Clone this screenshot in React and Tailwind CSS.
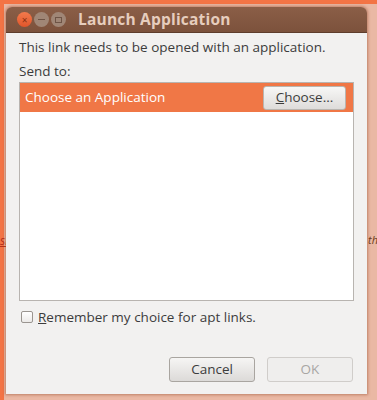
export default function App() {
  const font = { fontFamily: '"Open Sans", "Noto Sans", sans-serif' };
  return (
    <div className="relative w-[377px] h-[400px] overflow-hidden bg-[#eab8a4]" style={font}>
      <div className="absolute left-0 top-0 w-[377px] h-[4px] bg-[#f37445]" />
      <div className="absolute left-0 top-0 w-[4px] h-[400px] bg-[#f37445]" />
      <div className="absolute left-[0px] top-[232px] text-[12px] italic text-[#b5301a] underline">sl</div>
      <div className="absolute left-[368px] top-[232px] text-[11px] italic text-[#6b3a1a]">th</div>
      <div className="absolute left-[6px] top-[7px] w-[361px] h-[387px] flex flex-col rounded-t-[6px] overflow-hidden shadow-[0_0_3px_1px_rgba(160,90,60,0.6)]">
        <div className="h-[26px] shrink-0 flex items-center bg-gradient-to-b from-[#8b5e47] to-[#7c523c] border-b border-[#5e3d2c] pl-[11px]">
          <div className="flex items-center gap-[2px]">
            <div className="w-[15px] h-[15px] rounded-full bg-gradient-to-b from-[#f47a4c] to-[#e0552a] flex items-center justify-center text-[#8a3010] text-[10px] leading-none">×</div>
            <div className="w-[15px] h-[15px] rounded-full bg-[#a08676] flex items-center justify-center">
              <div className="w-[7px] h-[1px] bg-[#6e5446]" />
            </div>
            <div className="w-[15px] h-[15px] rounded-full bg-[#a08676] flex items-center justify-center">
              <div className="w-[7px] h-[6px] border border-[#6e5446]" />
            </div>
          </div>
          <div className="ml-[12px] text-[15.5px] font-bold text-[#e6cdbd] leading-none tracking-[0.2px]">Launch Application</div>
        </div>
        <div className="flex-1 bg-[#f2f1f0] flex flex-col px-[13px] pt-[4px] text-[13.5px] text-[#3c3c3c]">
          <div className="leading-[20px]">This link needs to be opened with an application.</div>
          <div className="leading-[20px] mt-[4px]">Send to:</div>
          <div className="mt-[1px] h-[219px] shrink-0 bg-white border border-[#b8b4b0] flex flex-col">
            <div className="h-[29px] bg-[#f07746] flex items-center justify-between pl-[5px] pr-[7px]">
              <span className="text-white">Choose an Application</span>
              <div className="w-[83px] h-[24px] rounded-[3px] border border-[#b9b5b0] bg-gradient-to-b from-[#f7f7f6] to-[#dedcda] flex items-center justify-center text-[#3c3c3c]">
                <span><span className="underline">C</span>hoose...</span>
              </div>
            </div>
          </div>
          <div className="flex items-center h-[20px] mt-[6px] ml-[2px]">
            <div className="w-[12px] h-[12px] border border-[#9a9590] rounded-[2px] bg-gradient-to-b from-white to-[#eceae8]" />
            <span className="ml-[5px] leading-[20px]"><span className="underline">R</span>emember my choice for apt links.</span>
          </div>
          <div className="flex justify-end gap-[12px] mt-[30px] pr-[1px]">
            <div className="w-[86px] h-[25px] rounded-[3px] border border-[#a9a5a0] bg-gradient-to-b from-[#f6f5f4] to-[#dcdad8] flex items-center justify-center">Cancel</div>
            <div className="w-[86px] h-[25px] rounded-[3px] border border-[#d0cdca] bg-[#efeeed] flex items-center justify-center text-[#a8a6a4]">OK</div>
          </div>
        </div>
      </div>
    </div>
  );
}
